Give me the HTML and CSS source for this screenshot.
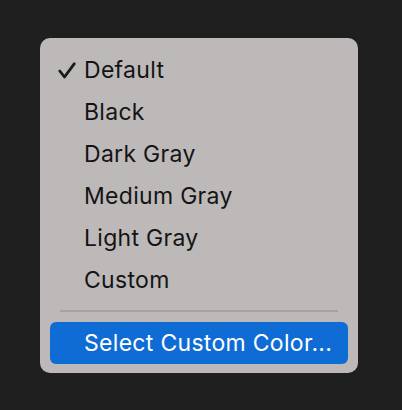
FILE: index.html
```html
<!DOCTYPE html>
<html>
<head>
<meta charset="utf-8">
<link rel="stylesheet" href="styles.css">
</head>
<body>
<div class="menu">
  <div class="item checked">
    <span class="mark"><svg width="18" height="17" viewBox="0 0 18 17"><path d="M1.8 9 L6.5 15 L16.2 1.8" fill="none" stroke="#1a1a1a" stroke-width="2.8" stroke-linecap="round" stroke-linejoin="round"/></svg></span>
    <span class="label">Default</span>
  </div>
  <div class="item"><span class="mark"></span><span class="label">Black</span></div>
  <div class="item"><span class="mark"></span><span class="label">Dark Gray</span></div>
  <div class="item"><span class="mark"></span><span class="label">Medium Gray</span></div>
  <div class="item"><span class="mark"></span><span class="label">Light Gray</span></div>
  <div class="item"><span class="mark"></span><span class="label">Custom</span></div>
  <div class="separator"></div>
  <div class="item selected"><span class="mark"></span><span class="label">Select Custom Color...</span></div>
</div>
</body>
</html>
```
FILE: styles.css
```css
html, body {
  margin: 0;
  padding: 0;
}
body {
  background: #1f1f1f;
  width: 402px;
  height: 410px;
  padding: 38px 0 0 40px;
  box-sizing: border-box;
  font-family: "Inter", "Liberation Sans", sans-serif;
}
.menu {
  width: 318px;
  height: 335px;
  box-sizing: border-box;
  background: #bdb9b9;
  border-radius: 10px;
  padding: 11px 10px 9px;
  display: flex;
  flex-direction: column;
}
.item {
  height: 42px;
  display: flex;
  align-items: center;
  border-radius: 6px;
  color: #141414;
  font-size: 23px;
  font-weight: 400;
  letter-spacing: 0.3px;
}
.mark {
  flex: none;
  display: flex;
  justify-content: flex-end;
  padding-right: 8px;
  box-sizing: content-box;
  width: 26px;
}
.mark svg { display: block; }
.separator {
  height: 1.5px;
  background: #a6a2a2;
  margin: 9px 10px 10px;
}
.selected {
  background: #0f6cd4;
  color: #ffffff;
}
```
